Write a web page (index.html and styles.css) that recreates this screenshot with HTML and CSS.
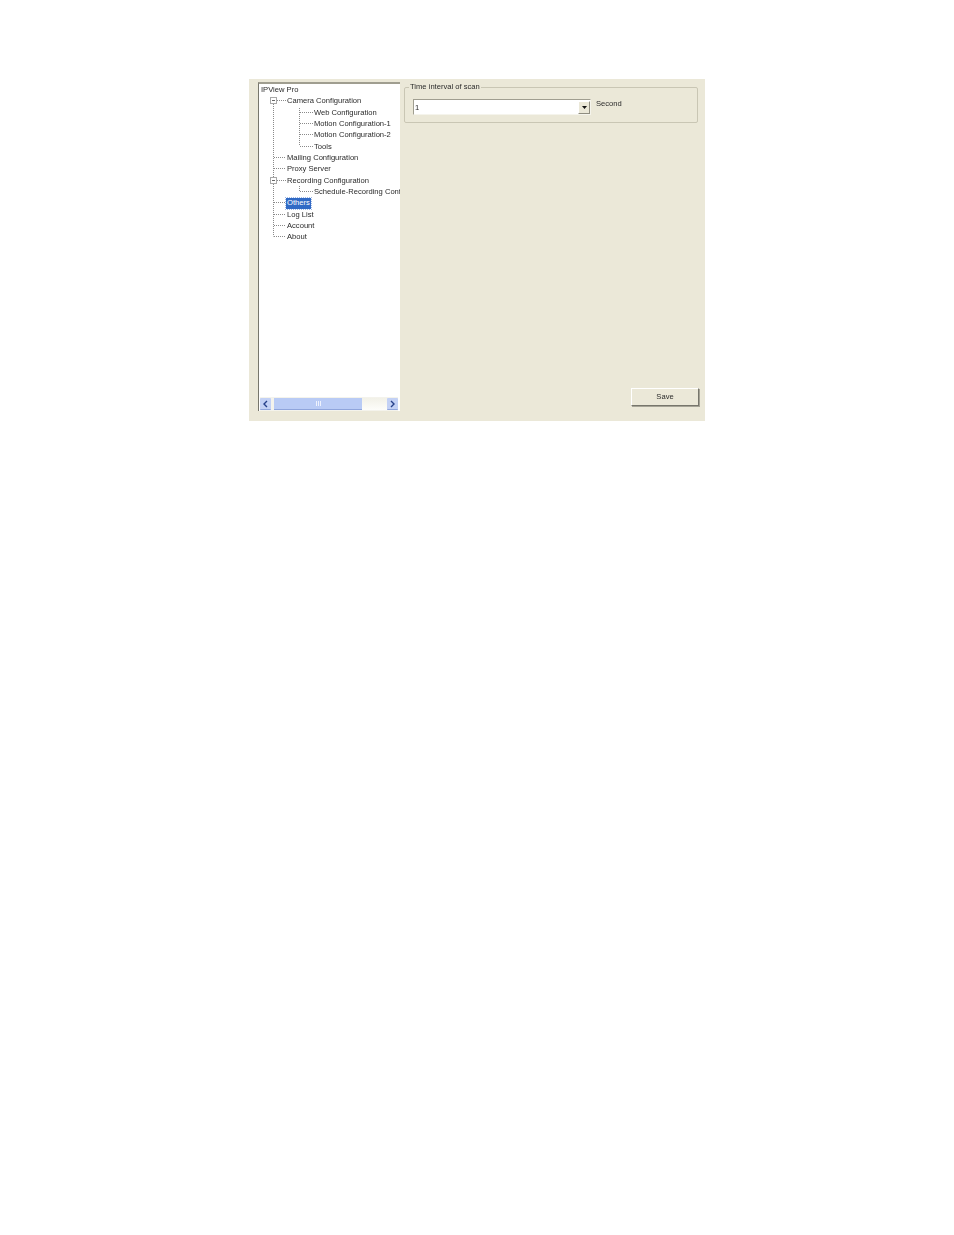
FILE: index.html
```html
<!DOCTYPE html>
<html lang="en">
<head>
<meta charset="utf-8">
<title>IPView Pro</title>
<link rel="stylesheet" href="styles.css">
</head>
<body>
<main class="window">
  <aside class="tree-box">
    <div class="tree">
      <svg class="lines" width="138" height="165" viewBox="0 0 138 165" aria-hidden="true">
        <g class="dots">
          <path d="M13.5 20V152.5"/>
          <path d="M39.5 24V62"/>
          <path d="M39.5 100V107.5"/>
          <path d="M17 16.5H27M14 73.5H27M14 84.5H27M17 96.5H27M14 118.5H27M14 130.5H27M14 141.5H27M14 152.5H27"/>
          <path d="M40 28.5H54M40 39.5H54M40 50.5H54M40 62.5H54M40 107.5H54"/>
        </g>
        <g class="box">
          <rect x="10.5" y="13.5" width="6" height="6"/>
          <path d="M12 16.5H15"/>
          <rect x="10.5" y="93.5" width="6" height="6"/>
          <path d="M12 96.5H15"/>
        </g>
      </svg>
      <div class="row l0"><span class="label">IPView Pro</span></div>
      <div class="row l1"><span class="label">Camera Configuration</span></div>
      <div class="row l2"><span class="label">Web Configuration</span></div>
      <div class="row l2"><span class="label">Motion Configuration-1</span></div>
      <div class="row l2"><span class="label">Motion Configuration-2</span></div>
      <div class="row l2"><span class="label">Tools</span></div>
      <div class="row l1"><span class="label">Mailing Configuration</span></div>
      <div class="row l1"><span class="label">Proxy Server</span></div>
      <div class="row l1"><span class="label">Recording Configuration</span></div>
      <div class="row l2"><span class="label">Schedule-Recording Configuration</span></div>
      <div class="row l1"><span class="selected">Others</span></div>
      <div class="row l1"><span class="label">Log List</span></div>
      <div class="row l1"><span class="label">Account</span></div>
      <div class="row l1"><span class="label">About</span></div>
    </div>
    <div class="hscroll">
      <div class="arrow"><svg width="11" height="12" viewBox="0 0 11 12" aria-hidden="true"><path d="M7 3L4 6L7 9"/></svg></div>
      <div class="thumb"><i></i><i></i><i></i></div>
      <div class="track"></div>
      <div class="arrow"><svg width="11" height="12" viewBox="0 0 11 12" aria-hidden="true"><path d="M4 3L7 6L4 9"/></svg></div>
    </div>
  </aside>
  <section class="panel">
    <fieldset class="group">
      <legend class="mono">Time interval of scan</legend>
      <div class="field-row">
        <div class="combo">
          <span class="value mono">1</span>
          <div class="drop"><svg width="5" height="3" viewBox="0 0 5 3" aria-hidden="true"><path d="M0 0H5L2.5 3Z"/></svg></div>
        </div>
        <span class="unit mono">Second</span>
      </div>
    </fieldset>
    <button class="save" type="button"><span class="mono">Save</span></button>
  </section>
</main>
</body>
</html>
```
FILE: styles.css
```css
html, body {
  margin: 0;
  background: #fff;
}
body {
  height: 1235px;
  overflow: hidden;
  font-family: "Liberation Sans", Arial, sans-serif;
  font-size: 7.6px;
  color: #2a2a2a;
}
.window {
  display: flex;
  width: 456px;
  height: 342px;
  margin: 79px 0 0 249px;
  background: #ebe8d8;
  box-sizing: border-box;
  padding: 3px 0 10px 9px;
}
.tree-box {
  width: 142px;
  display: flex;
  flex-direction: column;
  box-sizing: border-box;
  background: #fff;
  border-top: 2px solid #a09e90;
  border-left: 1px solid #77766c;
  padding-left: 1px;
  overflow: hidden;
}
.tree {
  position: relative;
  flex: 1;
  padding-top: 1px;
  overflow: hidden;
}
.lines {
  position: absolute;
  left: 0;
  top: 0;
}
.dots path {
  fill: none;
  stroke: #8a8a8a;
  stroke-width: 1;
  stroke-dasharray: 1 1;
}
.box rect {
  fill: #fff;
  stroke: #a8a8a8;
}
.box path {
  stroke: #666;
  fill: none;
}
.row {
  position: relative;
  height: 11.35px;
  line-height: 10.35px;
  white-space: nowrap;
}
.row span {
  display: inline-block;
  padding: 0 1px;
  background: #fff;
}
.label, .mono {
  filter: grayscale(1);
}
.row .selected {
  background: #316ac5;
  color: #fff;
  outline: 1px dotted #9db8e6;
}
.l0 { padding-left: 0; }
.l1 { padding-left: 26px; }
.l2 { padding-left: 53px; }
.hscroll {
  display: flex;
  height: 14px;
  flex: none;
  margin-right: 2px;
  background: #f4f3ec;
  box-sizing: border-box;
  padding: 1px 0;
}
.arrow {
  width: 11px;
  height: 12px;
  background: #c3d1f5;
  border-bottom: 1px solid #8fa5dc;
  box-sizing: border-box;
  border-radius: 1px;
  flex: none;
}
.arrow svg {
  display: block;
}
.arrow path {
  fill: none;
  stroke: #26408a;
  stroke-width: 1.4;
}
.thumb {
  width: 88px;
  height: 12px;
  margin-left: 3px;
  display: flex;
  align-items: center;
  justify-content: center;
  gap: 1px;
  background: #b9cbf5;
  border-bottom: 1px solid #8fa5dc;
  box-sizing: border-box;
  flex: none;
}
.thumb i {
  width: 1px;
  height: 5px;
  background: #eef2fd;
}
.track {
  flex: 1;
  background: linear-gradient(#f2f1e8, #fdfdfa);
}
.panel {
  flex: 1;
  display: flex;
  flex-direction: column;
  align-items: flex-start;
  padding: 0 6px 0 4px;
  min-width: 0;
}
.group {
  width: 294px;
  height: 41px;
  box-sizing: border-box;
  margin: 0;
  padding: 0 0 0 8px;
  border: 1px solid #c9c6b4;
  border-radius: 2px;
}
.group legend {
  padding: 0 1px;
  margin-left: -4px;
  line-height: 10px;
}
.field-row {
  display: flex;
  align-items: flex-start;
  margin-top: 7px;
}
.combo {
  width: 178px;
  height: 16px;
  display: flex;
  align-items: center;
  box-sizing: border-box;
  background: #fff;
  border: 1px solid #a09e90;
  border-bottom-color: #f5f4ec;
  border-right-color: #f5f4ec;
}
.value {
  flex: 1;
  padding-left: 1px;
}
.drop {
  width: 12px;
  height: 13px;
  display: flex;
  align-items: center;
  justify-content: center;
  box-sizing: border-box;
  background: #ebe8d8;
  border: 1px solid;
  border-color: #fff #8f8d80 #8f8d80 #fff;
}
.drop path {
  fill: #111;
}
.unit {
  margin: 1px 0 0 5px;
  line-height: 8px;
}
.save {
  width: 68px;
  height: 18px;
  margin: auto 0 5px 227px;
  padding: 0 0 1px;
  box-sizing: border-box;
  font: inherit;
  color: #2a2a2a;
  background: #ebe8d8;
  border: 1px solid;
  border-color: #fff #77766c #77766c #fff;
  box-shadow: 1px 1px 0 #a5a396;
}
.save span {
  display: block;
}
```
